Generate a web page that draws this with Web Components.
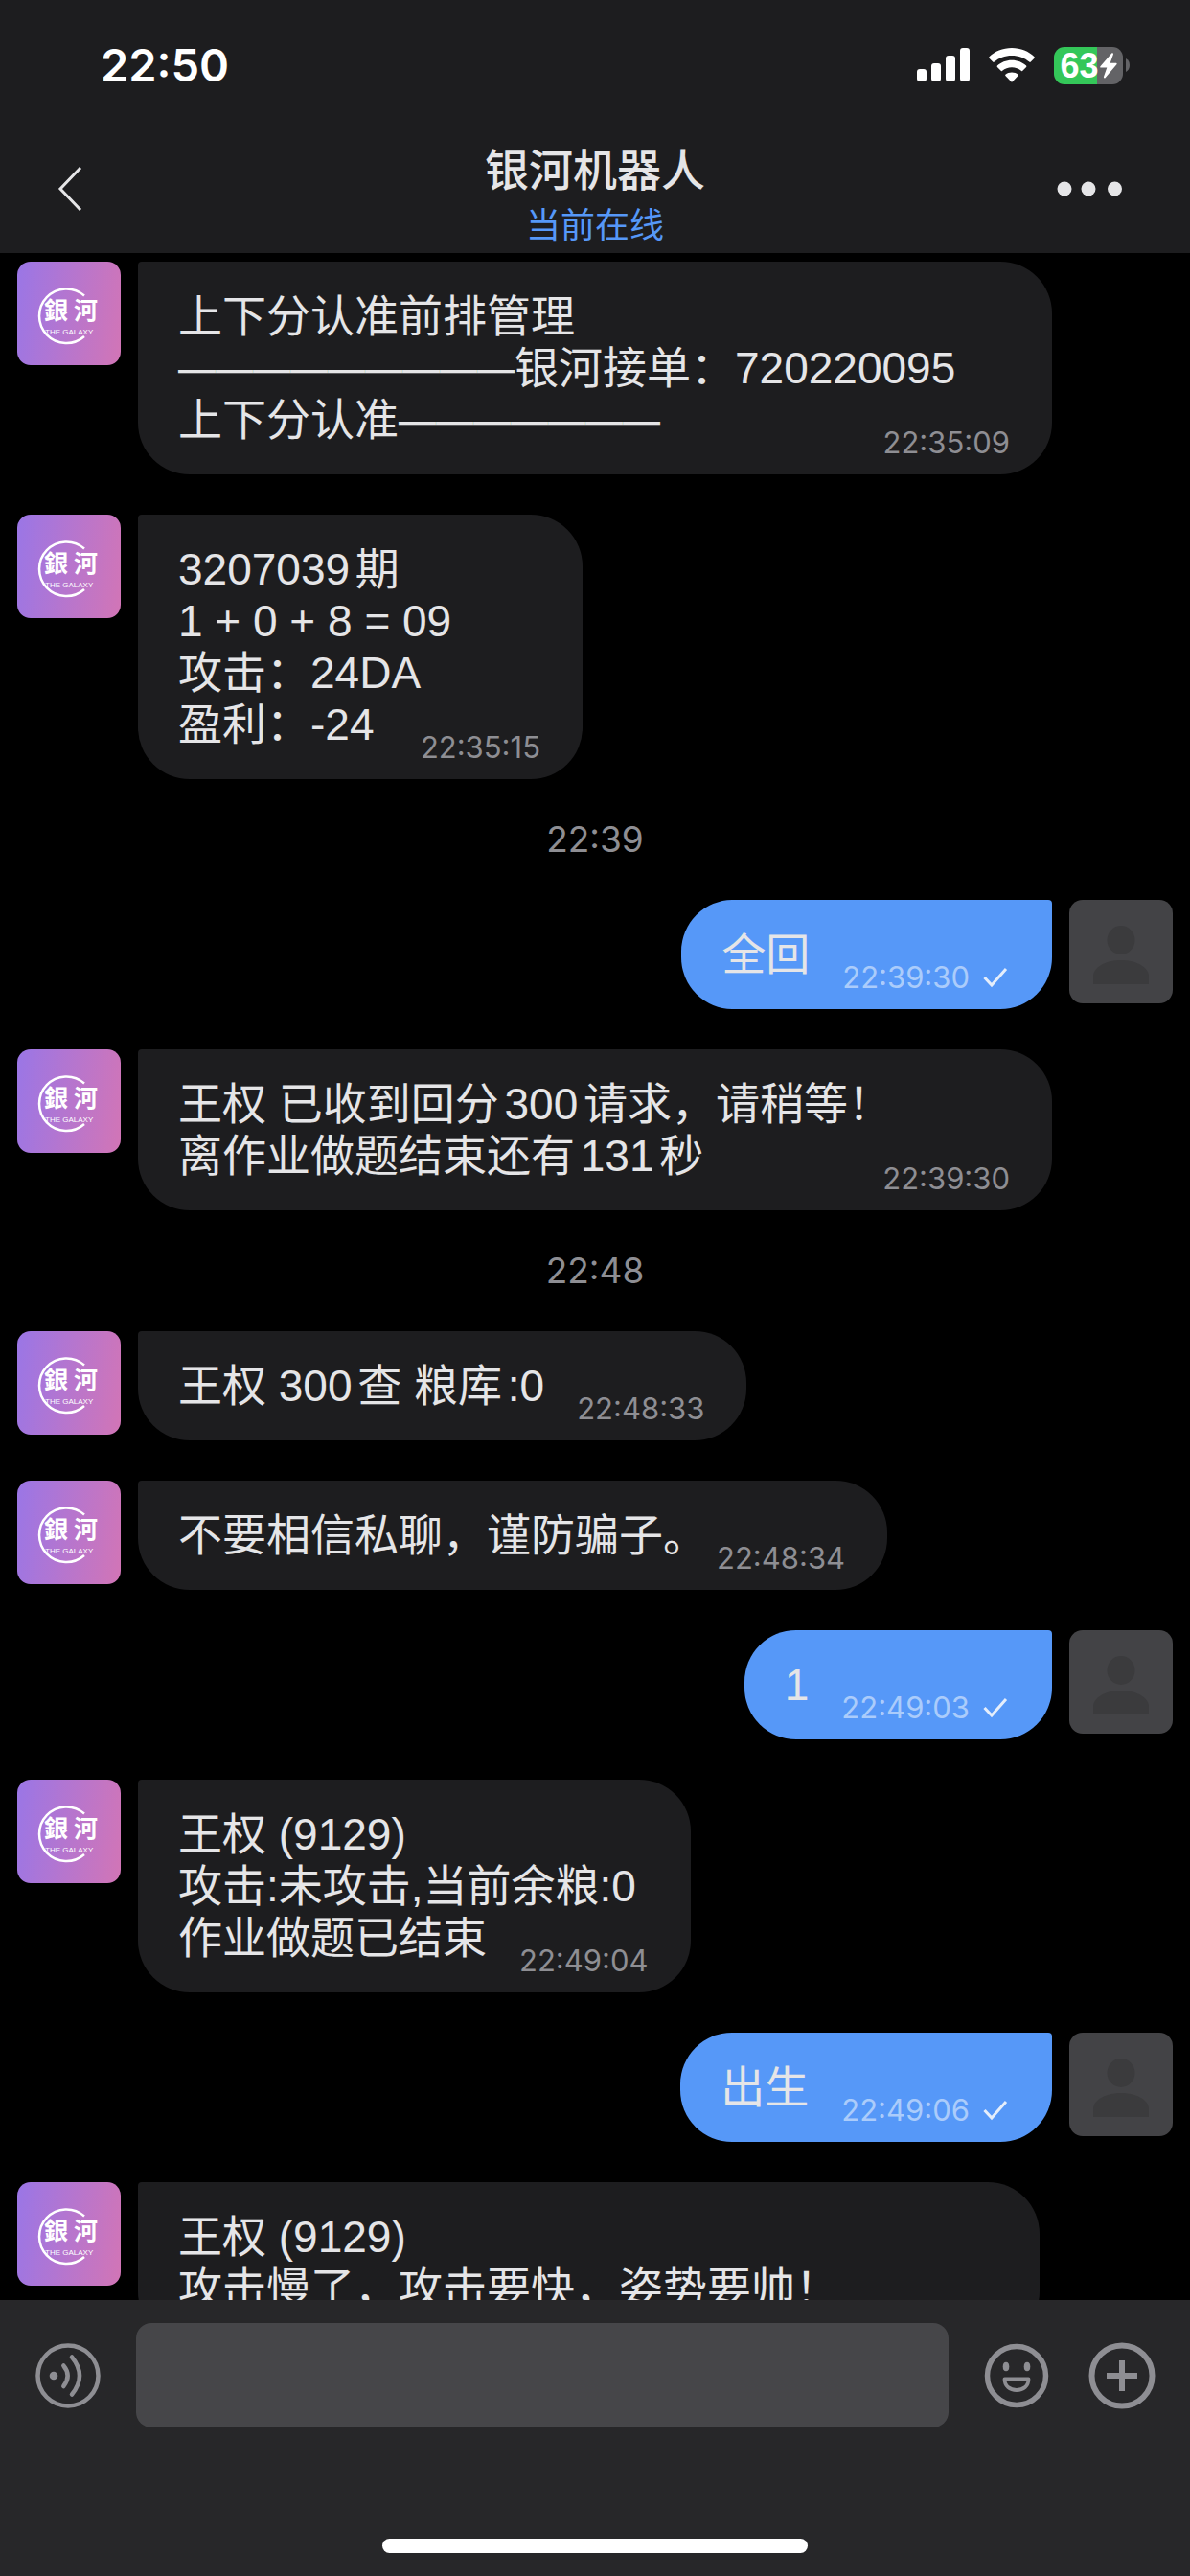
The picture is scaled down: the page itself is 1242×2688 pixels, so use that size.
<!DOCTYPE html>
<html lang="zh-CN">
<head>
<meta charset="utf-8">
<meta name="viewport" content="width=device-width, initial-scale=1">
<title>银河机器人</title>
<style>
  html, body { height: 100%; margin: 0; }
  body {
    background: #000;
    color: #e5e5e7;
    font-family: Inter, "Noto Sans CJK SC", sans-serif;
    --panel: #1d1d1f;
    --accent: #5698f8;
    --muted: #8e8e93;
  }
  .dash { font-family: Inter, sans-serif; font-size: 39px; line-height: 1; }
  .tight { text-autospace: no-autospace; }
  /* the blank half of a closing full stop hangs past the line */
  .hang { margin-inline-end: -24px; }
</style>
</head>
<body>
<chat-app>
  <status-bar slot="top" time="22:50" battery="63"></status-bar>
  <chat-header slot="top" name="银河机器人" status="当前在线"></chat-header>

  <chat-message time="22:35:09" wide>
    <span>上下分认准前排管理</span>
    <span><span class="dash">—————————</span>银河接单：720220095</span>
    <span slot="last">上下分认准<span class="dash">———————</span></span>
  </chat-message>
  <chat-message time="22:35:15" style="--bubble-min: 464px">
    <span>3207039期</span>
    <span>1 + 0 + 8 = 09</span>
    <span>攻击：24DA</span>
    <span slot="last">盈利：-24</span>
  </chat-message>
  <time-divider>22:39</time-divider>
  <chat-message time="22:39:30" sent><span slot="last">全回</span></chat-message>
  <chat-message time="22:39:30" wide>
    <span>王权 已收到回分300请求，请稍等！</span>
    <span slot="last">离作业做题结束还有131秒</span>
  </chat-message>
  <time-divider>22:48</time-divider>
  <chat-message time="22:48:33"><span slot="last">王权 300查 粮库:0</span></chat-message>
  <chat-message time="22:48:34"><span slot="last" class="hang">不要相信私聊，谨防骗子。</span></chat-message>
  <chat-message time="22:49:03" sent><span slot="last">1</span></chat-message>
  <chat-message time="22:49:04">
    <span>王权 (9129)</span>
    <span class="tight">攻击:未攻击,当前余粮:0</span>
    <span slot="last">作业做题已结束</span>
  </chat-message>
  <chat-message time="22:49:06" sent><span slot="last">出生</span></chat-message>
  <chat-message style="--bubble-min: 941px">
    <span>王权 (9129)</span>
    <span slot="last">攻击慢了，攻击要快，姿势要帅！</span>
  </chat-message>

  <chat-composer slot="bottom"></chat-composer>
</chat-app>

<script>
const define = (name, render) => customElements.define(name, class extends HTMLElement {
  constructor() { super(); this.attachShadow({ mode: 'open' }); }
  connectedCallback() { this.shadowRoot.innerHTML = render(this); }
});

define('chat-app', () => `
  <style>
    :host { display: flex; flex-direction: column; height: 100vh; overflow: hidden; }
    header, footer { flex: none; }
    main {
      flex: 1; min-height: 0; overflow: hidden; box-sizing: border-box;
      padding: 9px 18px 0; display: flex; flex-direction: column; gap: 42px;
    }
  </style>
  <header><slot name="top"></slot></header>
  <main><slot></slot></main>
  <footer><slot name="bottom"></slot></footer>`);

define('status-bar', el => `
  <style>
    :host {
      display: flex; justify-content: space-between; align-items: center;
      padding: 40px 63px 51px 105px; background: var(--panel); color: #fff;
    }
    time { font-size: 47px; line-height: 56px; font-weight: 600; }
    .icons { display: flex; align-items: center; gap: 20px; }
    svg { display: block; }
    .battery { display: flex; align-items: center; gap: 3px; }
    .cell {
      display: flex; align-items: center; justify-content: center; gap: 1px;
      width: 72px; height: 39px; border-radius: 11px;
      background: linear-gradient(90deg, #34c759 62%, #636366 62%);
      font: 700 36px/39px "Liberation Sans", sans-serif;
    }
  </style>
  <time>${el.getAttribute('time')}</time>
  <div class="icons">
    <svg width="55" height="36" viewBox="0 0 55 36" fill="#fff" aria-hidden="true">
      <rect x="0" y="22" width="10" height="13" rx="3"/><rect x="15" y="16" width="10" height="19" rx="3"/>
      <rect x="30" y="8" width="10" height="27" rx="3"/><rect x="45" y="0" width="10" height="35" rx="3"/>
    </svg>
    <svg width="48" height="36" viewBox="0 0 48 36" fill="#fff" aria-hidden="true">
      <path d="M24 0C14.600 0 6.100 3.600 0.400 9.300Q0 10 .5 10.700L4.200 14.600Q5 15.200 5.700 14.600C10.400 10.300 16.800 7.900 24 7.900S37.600 10.300 42.300 14.600Q43 15.200 43.800 14.600L47.500 10.700Q48 10 47.600 9.300C41.900 3.600 33.400 0 24 0Z"/>
      <path d="M24 12.700C18 12.700 12.700 15 8.900 18.500Q8.300 19.200 8.900 19.900L12.900 23.900Q13.500 24.400 14.200 23.800C16.800 21.600 20.200 20.300 24 20.300S31.200 21.600 33.800 23.800Q34.500 24.400 35.100 23.900L39.100 19.900Q39.700 19.200 39.100 18.500C35.300 15 30 12.700 24 12.700Z"/>
      <path d="M24 25.500C21.400 25.500 19.100 26.300 17.400 27.700Q16.800 28.400 17.400 29.100L23.300 35.200Q24 35.800 24.700 35.200L30.600 29.100Q31.200 28.400 30.600 27.700C28.900 26.300 26.600 25.500 24 25.500Z"/>
    </svg>
    <div class="battery">
      <div class="cell"><span>${el.getAttribute('battery')}</span>
        <svg width="18" height="27" viewBox="0 0 18 27" fill="#fff" aria-hidden="true"><path d="M12.500 .3 .4 14.200Q-.2 15.500 1 15.600H7.300L3.900 25.300Q4 27 5.500 26.200L17.400 12.200Q18.100 10.900 16.900 10.700H10.700L14 1.500Q14-.3 12.500 .3Z"/></svg>
      </div>
      <svg width="4" height="14" viewBox="0 0 4 14" fill="#636366" aria-hidden="true"><path d="M0 0Q4 2 4 7T0 14Z"/></svg>
    </div>
  </div>`);

define('chat-header', el => `
  <style>
    :host { display: flex; justify-content: space-between; background: var(--panel); padding: 0 36px 1px; }
    button { width: 120px; height: 100px; border: 0; padding: 0; background: none; display: flex; align-items: center; }
    .back { padding-left: 24px; }
    .more { justify-content: flex-end; }
    .title { text-align: center; }
    h1 { margin: 0; font-size: 46px; line-height: 60px; font-weight: 500; }
    p { margin: 0; font-size: 36px; line-height: 56px; color: var(--accent); }
  </style>
  <button class="back" aria-label="返回"><svg width="27" height="48" viewBox="0 0 27 48" fill="none" stroke="#e5e5e7" stroke-width="3"><path d="M24 2 3 24 24 46"/></svg></button>
  <div class="title"><h1>${el.getAttribute('name')}</h1><p>${el.getAttribute('status')}</p></div>
  <button class="more" aria-label="更多"><svg width="104" height="16" viewBox="0 0 104 16" fill="#e5e5e7"><circle cx="9" cy="8" r="7.500"/><circle cx="34" cy="8" r="7.500"/><circle cx="61.500" cy="8" r="7.500"/></svg></button>`);

define('time-divider', () => `
  <style>
    :host { display: block; flex: none; text-align: center; font-size: 37px; line-height: 42px; color: var(--muted); }
  </style><slot></slot>`);

define('chat-avatar', el => el.hasAttribute('user') ? `
  <style>:host { display: block; flex: none; } svg { display: block; border-radius: 14px; background: #434346; }</style>
  <svg width="108" height="108" viewBox="0 0 108 108" fill="#3b3b3d" aria-hidden="true">
    <ellipse cx="54" cy="42" rx="14.500" ry="15"/><path d="M25 88V80C25 69 40 63 54 63S83 69 83 80V88Z"/>
  </svg>` : `
  <style>
    :host { display: block; flex: none; }
    svg { display: block; border-radius: 14px; background: linear-gradient(98deg, #9a76e6, #d275b6); }
    .mark { font: 700 25px "Noto Sans CJK TC", sans-serif; }
    .name { font: 400 8px "Liberation Sans", sans-serif; }
  </style>
  <svg width="108" height="108" viewBox="0 0 108 108" fill="#fff" role="img" aria-label="银河">
    <path d="M70 35.500A28.300 28.300 0 1 0 70 78" fill="none" stroke="#fff" stroke-width="2.500"/>
    <text class="mark" x="28" y="60">銀</text><text class="mark" x="59" y="60">河</text>
    <text class="name" x="29" y="76">THE GALAXY</text>
  </svg>`);

define('chat-message', el => {
  const sent = el.hasAttribute('sent');
  const time = el.getAttribute('time');
  return `
  <style>
    :host { display: flex; flex: none; gap: 18px; align-items: flex-start; }
    :host([sent]) { flex-direction: row-reverse; }
    .bubble {
      box-sizing: border-box; padding: 30px 44px 30px 42px; border-radius: 4px 54px 54px 54px;
      min-width: var(--bubble-min, 0);
      background: var(--panel); font: 46px/54px "Liberation Sans", "Noto Sans CJK SC", sans-serif; white-space: nowrap;
      text-autospace: normal;
    }
    :host([wide]) .bubble { flex: 1; margin-right: 126px; }
    :host([sent]) .bubble { background: var(--accent); border-radius: 54px 4px 54px 54px; }
    ::slotted(span) { display: block; }
    .last { display: flex; justify-content: space-between; align-items: flex-end; gap: 34px; }
    .meta { display: flex; align-items: center; gap: 14px; margin-bottom: -15px; }
    time { font: 31px/36px Inter, sans-serif; color: var(--muted); }
    :host([sent]) time { color: #abccfb; }
    svg { display: block; }
  </style>
  <chat-avatar ${sent ? 'user' : ''}></chat-avatar>
  <div class="bubble">
    <slot></slot>
    <div class="last"><slot name="last"></slot>
      ${time ? `<div class="meta"><time>${time}</time>${sent ? '<svg width="28" height="22" viewBox="0 0 28 22" fill="none" stroke="#e5eefb" stroke-width="3" role="img" aria-label="已送达"><path d="M1.500 11 9 19 24 2"/></svg>' : ''}</div>` : ''}
    </div>
  </div>`;
});

define('chat-composer', () => `
  <style>
    :host { display: flex; flex-direction: column; align-items: center; gap: 116px; padding: 24px 36px; background: #272729; }
    form { display: flex; align-items: center; align-self: stretch; gap: 36px; }
    input {
      flex: 1; min-width: 0; height: 109px; box-sizing: border-box; border: 0; border-radius: 16px;
      padding: 0 28px; background: #464649; color: inherit; font: inherit; font-size: 46px;
    }
    button { flex: none; border: 0; padding: 0; background: none; }
    .tools { display: flex; gap: 40px; }
    svg { display: block; }
    .home { width: 444px; height: 15px; border-radius: 8px; background: #fff; }
  </style>
  <form>
    <button type="button" aria-label="语音"><svg width="70" height="70" viewBox="0 0 70 70" fill="none" stroke="#8e8e93" stroke-width="4.500" stroke-linecap="round">
      <circle cx="35" cy="35" r="31.500"/><circle cx="20" cy="35" r="4.300" fill="#8e8e93" stroke="none"/>
      <path d="M30.300 24.500Q39 35 30.300 46M39 15.500Q55 35 39 54.500"/></svg></button>
    <input type="text" aria-label="消息">
    <div class="tools">
      <button type="button" aria-label="表情"><svg width="70" height="70" viewBox="0 0 70 70" fill="none" stroke="#8e8e93">
        <circle cx="35" cy="35" r="30.500" stroke-width="5.500"/>
        <g fill="#8e8e93" stroke="none"><ellipse cx="24" cy="25.500" rx="3.300" ry="4.800"/><ellipse cx="46" cy="25.500" rx="3.300" ry="4.800"/></g>
        <path d="M22.500 38.500H47.500C47.500 46 42 50 35 50S22.500 46 22.500 38.500Z" stroke-width="3.800" stroke-linejoin="round"/></svg></button>
      <button type="button" aria-label="更多功能"><svg width="70" height="70" viewBox="0 0 70 70" fill="none" stroke="#8e8e93" stroke-width="6">
        <circle cx="35" cy="35" r="31.500"/><path d="M19 35H51M35 19V51"/></svg></button>
    </div>
  </form>
  <div class="home"></div>`);
</script>
</body>
</html>
